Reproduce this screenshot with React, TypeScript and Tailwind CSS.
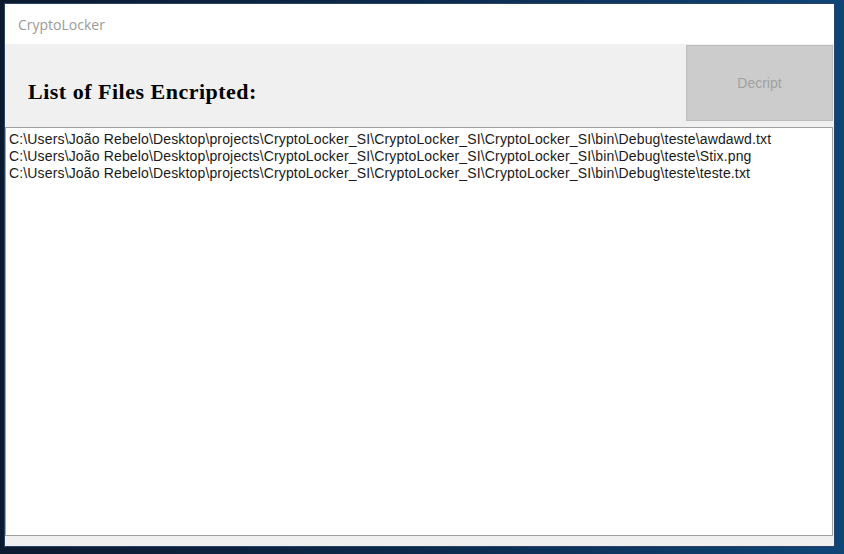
const files = [
  "C:\\Users\\João Rebelo\\Desktop\\projects\\CryptoLocker_SI\\CryptoLocker_SI\\CryptoLocker_SI\\bin\\Debug\\teste\\awdawd.txt",
  "C:\\Users\\João Rebelo\\Desktop\\projects\\CryptoLocker_SI\\CryptoLocker_SI\\CryptoLocker_SI\\bin\\Debug\\teste\\Stix.png",
  "C:\\Users\\João Rebelo\\Desktop\\projects\\CryptoLocker_SI\\CryptoLocker_SI\\CryptoLocker_SI\\bin\\Debug\\teste\\teste.txt",
];

export default function App() {
  return (
    <div className="w-[844px] h-[554px] overflow-hidden bg-gradient-to-r from-[#0b1a2f] via-[#0c2a4d] to-[#0e4577] pl-[4px] pt-[3px]">
      <div className="w-[831px] h-[544px] flex flex-col border border-[#2b4466] bg-[#f0f0f0]">
        {/* title bar */}
        <div className="h-[40px] shrink-0 bg-white flex items-center pl-[13px] font-['Open_Sans',sans-serif] text-[14px] text-[#9a9a9a]">
          CryptoLocker
        </div>

        {/* header */}
        <div className="h-[83px] shrink-0 flex items-start justify-between">
          <h1 className="mt-[31px] ml-[23px] font-['Liberation_Serif',serif] font-bold text-[22px] text-black tracking-[0.5px]">
            List of Files Encripted:
          </h1>
          <button className="mt-[1px] mr-[1px] w-[147px] h-[76px] bg-[#cccccc] border border-[#bcbcbc] font-['Liberation_Sans',sans-serif] text-[14px] text-[#a0a0a0]">
            Decript
          </button>
        </div>

        {/* list */}
        <div className="flex-1 mr-[1px] bg-white border border-[#a0a0a0] pl-[3px] pt-[3px] font-['Liberation_Sans',sans-serif] text-[14px] leading-[17px] text-[#1a1a1a] tracking-[0.15px]">
          {files.map((f) => (
            <div key={f} className="whitespace-nowrap">
              {f}
            </div>
          ))}
        </div>
        <div className="h-[10px] shrink-0 bg-[#f0f0f0]" />
      </div>
    </div>
  );
}
